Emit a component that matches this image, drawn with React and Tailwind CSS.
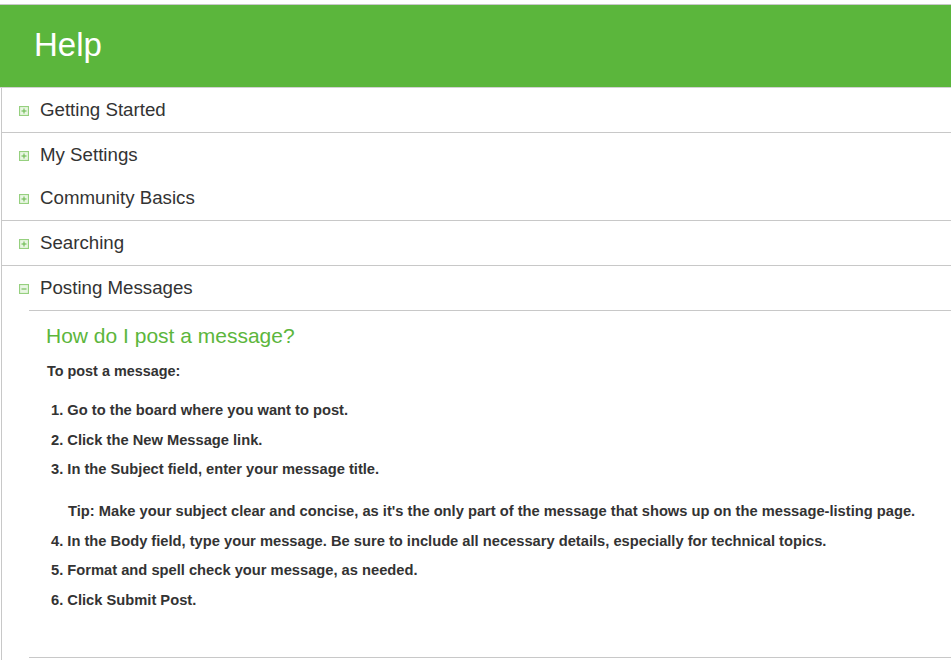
import React from "react";

function Toggle({ open }) {
  return (
    <svg width="10" height="10" viewBox="0 0 10 10" className="shrink-0 mt-[2px]">
      <rect x="0.5" y="0.5" width="9" height="9" fill="#e9f6e4" stroke="#96d07f" strokeWidth="1.2" />
      <line x1="2.5" y1="5" x2="7.5" y2="5" stroke="#6cbb50" strokeWidth="1.1" />
      {!open && <line x1="5" y1="2.5" x2="5" y2="7.5" stroke="#6cbb50" strokeWidth="1.1" />}
    </svg>
  );
}

function Row({ label, open, h, border }) {
  return (
    <div className={`${h} flex items-center pl-[17px] ${border ? "border-b border-[#c8c8c8]" : ""}`}>
      <Toggle open={open} />
      <span className="ml-[11px] mt-[1px] text-[18.7px] text-[#333333]">{label}</span>
    </div>
  );
}

export default function App() {
  return (
    <div className="w-[951px] h-[660px] overflow-hidden bg-white font-['Liberation_Sans',Arial,sans-serif]">
      <div className="mt-[4px] border-t border-[#c8c8c8]">
        <div className="h-[83px] bg-[#5bb63c] border-b border-[#d2d2d2] pl-[34px] flex items-center">
          <span className="text-white text-[33px] leading-none -mt-[3px]">Help</span>
        </div>
        <div className="ml-[1px] border-l border-[#c8c8c8] h-[600px]">
          <Row label="Getting Started" h="h-[45px]" border />
          <Row label="My Settings" h="h-[43px]" />
          <Row label="Community Basics" h="h-[45px]" border />
          <Row label="Searching" h="h-[45px]" border />
          <Row label="Posting Messages" open h="h-[44px]" />
          <div className="ml-[27px] border-t border-b border-[#c8c8c8] h-[348px] pl-[17px] text-[#333333]">
            <div className="pt-[13px] text-[21px] leading-[24px] text-[#5cb63c]">How do I post a message?</div>
            <div className="mt-[15px] pl-[1px] text-[14.4px] leading-[16px] font-bold">To post a message:</div>
            <div className="mt-[17px] pl-[5px] text-[14.7px] leading-[29.5px] font-bold">
              <div>1. Go to the board where you want to post.</div>
              <div>2. Click the New Message link.</div>
              <div>3. In the Subject field, enter your message title.</div>
              <div className="mt-[12.5px] pl-[17px]">
                Tip: Make your subject clear and concise, as it's the only part of the message that shows up on the message-listing page.
              </div>
              <div>4. In the Body field, type your message. Be sure to include all necessary details, especially for technical topics.</div>
              <div>5. Format and spell check your message, as needed.</div>
              <div>6. Click Submit Post.</div>
            </div>
          </div>
        </div>
      </div>
    </div>
  );
}
